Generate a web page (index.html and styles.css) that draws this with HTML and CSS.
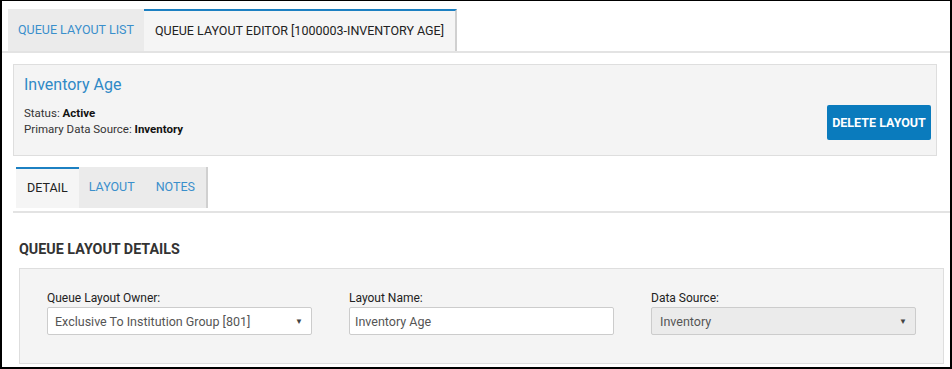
FILE: index.html
```html
<!DOCTYPE html>
<html lang="en">

<head>
    <meta charset="UTF-8">
    <meta name="viewport" content="width=device-width, initial-scale=1.0">
    <title>Queue Layout Editor</title>
    <link rel="stylesheet" href="styles.css">
</head>

<body>

    <div class="frame">

        <div class="top-tabs">
            <a class="tab" href="#">QUEUE LAYOUT LIST</a>
            <a class="tab active" href="#">QUEUE LAYOUT EDITOR [1000003-INVENTORY AGE]</a>
        </div>

        <div class="layout-header">
            <div class="layout-info">
                <h1>Inventory Age</h1>
                <div class="meta">Status: <b>Active</b></div>
                <div class="meta">Primary Data Source: <b>Inventory</b></div>
            </div>
            <button type="button" class="btn-delete">DELETE LAYOUT</button>
        </div>

        <div class="sub-tabs">
            <a class="tab active" href="#">DETAIL</a>
            <a class="tab" href="#">LAYOUT</a>
            <a class="tab last" href="#">NOTES</a>
        </div>

        <h2 class="section-title">QUEUE LAYOUT DETAILS</h2>

        <div class="details-panel">
            <div class="field">
                <label>Queue Layout Owner:</label>
                <div class="select">
                    <span>Exclusive To Institution Group [801]</span>
                    <span class="arrow">&#9660;</span>
                </div>
            </div>

            <div class="field">
                <label for="layoutName">Layout Name:</label>
                <input type="text" id="layoutName" value="Inventory Age">
            </div>

            <div class="field">
                <label>Data Source:</label>
                <div class="select disabled">
                    <span>Inventory</span>
                    <span class="arrow">&#9660;</span>
                </div>
            </div>
        </div>

    </div>

</body>

</html>
```

FILE: styles.css
```css
body {
    font-family: Roboto, 'Liberation Sans', sans-serif;
    margin: 0;
    background-color: #ffffff;
    color: #333;
}

.frame {
    width: 952px;
    height: 369px;
    box-sizing: border-box;
    border: 2px solid #000;
    border-top-width: 1px;
    overflow: hidden;
}

/* top tabs */

.top-tabs {
    display: flex;
    padding: 8px 0 0 6px;
    border-bottom: 2px solid #e3e3e3;
}

.top-tabs .tab {
    display: block;
    height: 42px;
    line-height: 42px;
    padding: 0 10px;
    font-size: 12.5px;
    color: #3a8fcb;
    text-decoration: none;
    background-color: #ebebeb;
    box-sizing: border-box;
}

.top-tabs .tab.active {
    color: #222;
    background-color: #f5f5f5;
    border-top: 2px solid #1c80c2;
    border-right: 2px solid #d0d0d0;
    line-height: 40px;
    padding: 0 11px 0 11px;
}

/* header */

.layout-header {
    display: flex;
    justify-content: space-between;
    align-items: flex-end;
    margin: 11px 13px 0 11px;
    height: 92px;
    box-sizing: border-box;
    padding: 0 5px 15px 10px;
    background-color: #f4f4f4;
    border: 1px solid #dedede;
}

.layout-info {
    align-self: flex-start;
}

.layout-info h1 {
    margin: 10px 0 11px;
    font-size: 16px;
    font-weight: normal;
    color: #2f89c6;
}

.layout-info .meta {
    font-size: 11.5px;
    line-height: 16px;
    color: #333;
}

.layout-info .meta b {
    color: #111;
}

.btn-delete {
    width: 104px;
    height: 35px;
    padding: 0;
    background-color: #0a7bbd;
    color: #fff;
    border: none;
    border-radius: 2px;
    font-family: Roboto, 'Liberation Sans', sans-serif;
    font-size: 12.5px;
    font-weight: bold;
    cursor: pointer;
}

/* sub tabs */

.sub-tabs {
    display: flex;
    margin: 11px 0 0 11px;
    padding-left: 3px;
    border-bottom: 2px solid #e3e3e3;
}

.sub-tabs .tab {
    display: block;
    height: 41px;
    line-height: 40px;
    padding: 0 11px 0 10px;
    font-size: 12.5px;
    color: #3a8fcb;
    text-decoration: none;
    background-color: #ebebeb;
    box-sizing: border-box;
    margin-bottom: 3px;
}

.sub-tabs .tab.active {
    color: #222;
    background-color: #f5f5f5;
    border-top: 2px solid #1c80c2;
    line-height: 38px;
    padding: 0 11px;
}

.sub-tabs .tab.last {
    border-right: 2px solid #d0d0d0;
}

/* details */

.section-title {
    margin: 28px 0 11px 17px;
    font-size: 14.3px;
    font-weight: bold;
    color: #333;
}

.details-panel {
    display: flex;
    gap: 37px;
    margin: 0 6px 0 17px;
    height: 96px;
    box-sizing: border-box;
    padding: 22px 27px 0 27px;
    background-color: #f4f4f4;
    border: 1px solid #dedede;
}

.field {
    width: 265px;
}

.field label {
    display: block;
    margin-bottom: 2px;
    font-size: 12px;
    color: #222;
}

.field input[type="text"],
.field .select {
    display: flex;
    align-items: center;
    justify-content: space-between;
    width: 100%;
    height: 28px;
    box-sizing: border-box;
    padding: 0 8px 0 7px;
    border: 1px solid #ccc;
    border-radius: 2px;
    background-color: #fff;
    font-family: Roboto, 'Liberation Sans', sans-serif;
    font-size: 12.5px;
    color: #555;
    outline: none;
}

.field input[type="text"] {
    padding-left: 5px;
}

.field .select.disabled {
    background-color: #ebebeb;
    padding-left: 8px;
}

.field .arrow {
    font-size: 8px;
    color: #444;
}
```
